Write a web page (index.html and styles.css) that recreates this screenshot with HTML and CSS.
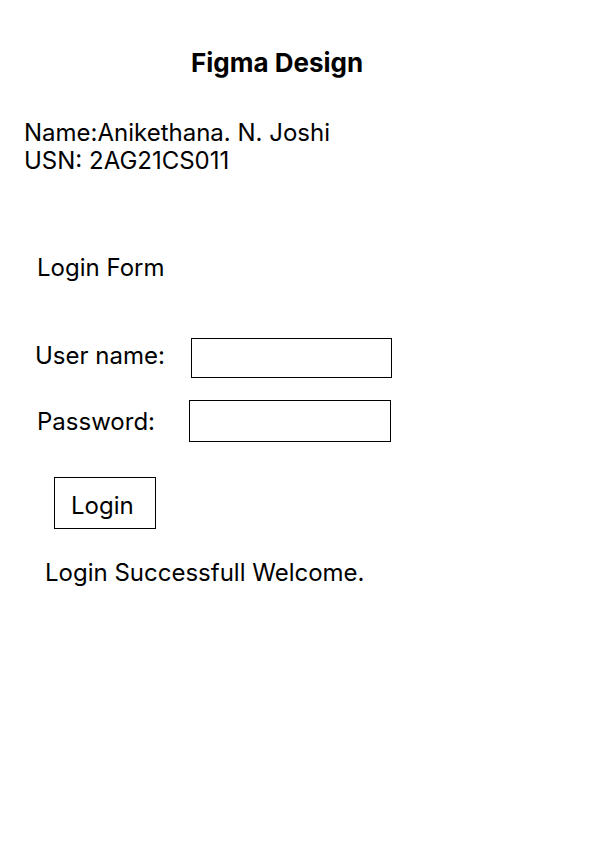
FILE: index.html
```html
<!DOCTYPE html>
<html>
<head>
<meta charset="utf-8">
<link rel="stylesheet" href="styles.css">
</head>
<body>
<div class="page">
  <h1 class="title">Figma Design</h1>
  <div class="info">
    <div>Name:Anikethana. N. Joshi</div>
    <div>USN: 2AG21CS011</div>
  </div>
  <div class="form-title">Login Form</div>
  <div class="row row-user">
    <span class="label">User name:</span>
    <span class="field field-user"></span>
  </div>
  <div class="row row-pass">
    <span class="label">Password:</span>
    <span class="field field-pass"></span>
  </div>
  <div class="btn">Login</div>
  <div class="msg">Login Successfull Welcome.</div>
</div>
</body>
</html>
```

FILE: styles.css
```css
html, body {
  margin: 0;
  padding: 0;
  background: #ffffff;
}
body {
  font-family: Inter, "Noto Sans", sans-serif;
  color: #000000;
  width: 595px;
  height: 842px;
}
.page {
  padding-top: 47px;
}
.title {
  margin: 0 0 0 191px;
  font-size: 26px;
  font-weight: 700;
  line-height: 32px;
}
.info {
  margin: 40px 0 0 24px;
  font-size: 24px;
  line-height: 28px;
}
.form-title {
  margin: 78px 0 0 37px;
  font-size: 24px;
  line-height: 29px;
}
.row {
  display: flex;
  align-items: flex-start;
  font-size: 24px;
  line-height: 29px;
}
.row-user {
  margin-top: 56px;
  padding-left: 35px;
}
.row-user .label {
  width: 156px;
  margin-top: 3px;
}
.row-pass {
  margin-top: 22px;
  padding-left: 37px;
}
.row-pass .label {
  width: 152px;
  margin-top: 7px;
}
.field {
  display: block;
  border: 1px solid #000;
  box-sizing: border-box;
}
.field-user { width: 201px; height: 40px; }
.field-pass { width: 202px; height: 42px; }
.btn {
  margin: 35px 0 0 54px;
  width: 102px;
  height: 52px;
  box-sizing: border-box;
  border: 1px solid #000;
  padding: 13px 0 0 16px;
  font-size: 24px;
  line-height: 29px;
}
.msg {
  margin: 29px 0 0 45px;
  font-size: 24px;
  line-height: 29px;
}
```
